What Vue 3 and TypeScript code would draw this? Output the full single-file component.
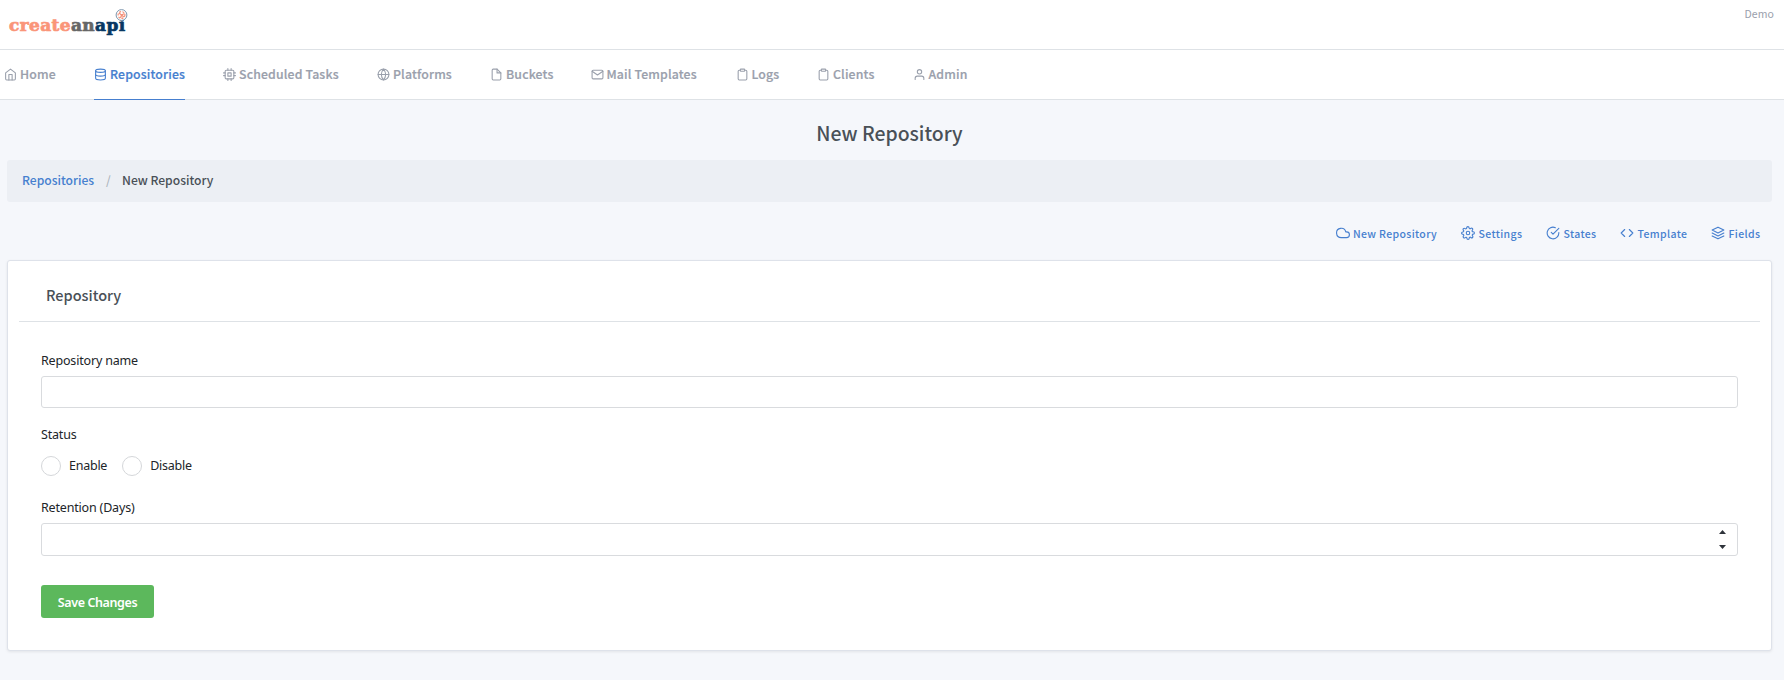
<script setup lang="ts">
import { ref } from 'vue'

interface LinkItem {
  label: string
  icon: string
  width: number
  active?: boolean
}

const icons: Record<string, string> = {
  home: '<path d="M3 9l9-7 9 7v11a2 2 0 0 1-2 2H5a2 2 0 0 1-2-2z"/><path d="M9 22V12h6v10"/>',
  database: '<ellipse cx="12" cy="5" rx="9" ry="3"/><path d="M21 12c0 1.66-4 3-9 3s-9-1.34-9-3"/><path d="M3 5v14c0 1.66 4 3 9 3s9-1.34 9-3V5"/>',
  cpu: '<rect x="4" y="4" width="16" height="16" rx="2"/><rect x="9" y="9" width="6" height="6"/><path d="M9 1v3M15 1v3M9 20v3M15 20v3M20 9h3M20 14h3M1 9h3M1 14h3"/>',
  globe: '<circle cx="12" cy="12" r="10"/><path d="M2 12h20M12 2a15.3 15.3 0 0 1 4 10 15.3 15.3 0 0 1-4 10 15.3 15.3 0 0 1-4-10 15.3 15.3 0 0 1 4-10z"/>',
  file: '<path d="M13 2H6a2 2 0 0 0-2 2v16a2 2 0 0 0 2 2h12a2 2 0 0 0 2-2V9z"/><path d="M13 2v7h7"/>',
  mail: '<path d="M4 4h16c1.1 0 2 .9 2 2v12c0 1.1-.9 2-2 2H4c-1.1 0-2-.9-2-2V6c0-1.1.9-2 2-2z"/><path d="M22 6l-10 7L2 6"/>',
  clipboard: '<path d="M16 4h2a2 2 0 0 1 2 2v14a2 2 0 0 1-2 2H6a2 2 0 0 1-2-2V6a2 2 0 0 1 2-2h2"/><rect x="8" y="2" width="8" height="4" rx="1"/>',
  user: '<path d="M20 21v-2a4 4 0 0 0-4-4H8a4 4 0 0 0-4 4v2"/><circle cx="12" cy="7" r="4"/>',
  cloud: '<path d="M18 10h-1.26A8 8 0 1 0 9 20h9a5 5 0 0 0 0-10z"/>',
  settings: '<circle cx="12" cy="12" r="3"/><path d="M19.4 15a1.65 1.65 0 0 0 .33 1.82l.06.06a2 2 0 1 1-2.83 2.83l-.06-.06a1.65 1.65 0 0 0-2.8 1.17V21a2 2 0 0 1-4 0v-.09a1.65 1.65 0 0 0-2.9-1.08l-.06.06a2 2 0 1 1-2.83-2.83l.06-.06a1.65 1.65 0 0 0-1.17-2.8H3a2 2 0 0 1 0-4h.09a1.65 1.65 0 0 0 1.08-2.9l-.06-.06a2 2 0 1 1 2.83-2.83l.06.06a1.65 1.65 0 0 0 2.8-1.17V3a2 2 0 0 1 4 0v.09a1.65 1.65 0 0 0 2.8 1.17l.06-.06a2 2 0 1 1 2.83 2.83l-.06.06a1.65 1.65 0 0 0 1.17 2.8H21a2 2 0 0 1 0 4h-.09a1.65 1.65 0 0 0-1.51 1z"/>',
  check: '<path d="M22 11.08V12a10 10 0 1 1-5.93-9.14"/><path d="M22 4L12 14.01l-3-3"/>',
  code: '<path d="M16 18l6-6-6-6M8 6l-6 6 6 6"/>',
  layers: '<path d="M12 2L2 7l10 5 10-5z"/><path d="M2 17l10 5 10-5M2 12l10 5 10-5"/>',
}

const navItems: LinkItem[] = [
  { label: 'Home', icon: 'home', width: 52 },
  { label: 'Repositories', icon: 'database', width: 91, active: true },
  { label: 'Scheduled Tasks', icon: 'cpu', width: 116 },
  { label: 'Platforms', icon: 'globe', width: 75 },
  { label: 'Buckets', icon: 'file', width: 62.5 },
  { label: 'Mail Templates', icon: 'mail', width: 107 },
  { label: 'Logs', icon: 'clipboard', width: 43.5 },
  { label: 'Clients', icon: 'clipboard', width: 57.5 },
  { label: 'Admin', icon: 'user', width: 55 },
]

const actions: LinkItem[] = [
  { label: 'New Repository', icon: 'cloud', width: 101.5 },
  { label: 'Settings', icon: 'settings', width: 61 },
  { label: 'States', icon: 'check', width: 50 },
  { label: 'Template', icon: 'code', width: 67 },
  { label: 'Fields', icon: 'layers', width: 49 },
]

const name = ref('')
const status = ref('')
const retention = ref<number>()

const step = (amount: number) => {
  retention.value = (Number(retention.value) || 0) + amount
}
</script>

<template>
  <div class="page">
    <header class="topbar">
      <svg class="logo" width="122" height="32" viewBox="0 0 122 32" role="img" aria-label="createanapi">
        <text class="word" x="1" y="23.3" textLength="116.500" lengthAdjust="spacingAndGlyphs"><tspan class="create">create</tspan><tspan class="an">an</tspan><tspan class="api">api</tspan></text>
        <circle cx="113.5" cy="7" r="5.4" fill="#fff" stroke="#7d96ae" stroke-width="1" />
        <g fill="none" stroke="#f48f77" stroke-width="1.2">
          <circle cx="113.5" cy="7" r="3.4" stroke-dasharray="2 1.3" />
          <path d="M111 5l2.5 2 3-1.500M113.500 7l-1 3M113.500 7l2.500 2" />
        </g>
      </svg>
      <span class="account">Demo</span>
    </header>

    <nav class="nav">
      <a
        v-for="item in navItems"
        :key="item.label"
        class="nav-link"
        :class="{ active: item.active }"
        :style="{ width: item.width + 'px' }"
      >
        <svg class="icon" viewBox="0 0 24 24" v-html="icons[item.icon]"></svg>
        <span>{{ item.label }}</span>
      </a>
    </nav>

    <main class="content">
      <h1 class="title">New Repository</h1>

      <div class="breadcrumb">
        <a class="crumb">Repositories</a>
        <span class="slash">/</span>
        <span class="current">New Repository</span>
      </div>

      <div class="actions">
        <a v-for="item in actions" :key="item.label" class="action" :style="{ width: item.width + 'px' }">
          <svg class="icon" viewBox="0 0 24 24" v-html="icons[item.icon]"></svg>
          <span>{{ item.label }}</span>
        </a>
      </div>

      <section class="card">
        <h2 class="card-title">Repository</h2>
        <form class="form" @submit.prevent>
          <label class="label" for="name">Repository name</label>
          <input id="name" v-model="name" class="field name" type="text" />

          <span class="label status-label">Status</span>
          <div class="radios">
            <label class="radio"><input v-model="status" type="radio" value="enable" /><span>Enable</span></label>
            <label class="radio"><input v-model="status" type="radio" value="disable" /><span>Disable</span></label>
          </div>

          <label class="label retention-label" for="retention">Retention (Days)</label>
          <div class="field number">
            <input id="retention" v-model="retention" type="text" />
            <div class="spinner">
              <button type="button" aria-label="Increase" @click="step(1)"><svg width="7" height="4"><path d="M0 4L3.500 0 7 4z" /></svg></button>
              <button type="button" aria-label="Decrease" @click="step(-1)"><svg width="7" height="4"><path d="M0 0h7L3.500 4z" /></svg></button>
            </div>
          </div>

          <button class="save" type="submit">Save Changes</button>
        </form>
      </section>
    </main>
  </div>
</template>

<style>
html,
body {
  margin: 0;
  background: #f5f7fb;
}
</style>

<style scoped>
.page {
  box-sizing: border-box;
  height: 680px;
  overflow: hidden;
  background: #f5f7fb;
  font-family: "Noto Sans CJK SC", "Noto Sans", sans-serif;
  color: #495057;
}
.topbar {
  box-sizing: border-box;
  display: flex;
  justify-content: space-between;
  height: 50px;
  padding: 8px 10px 0 8px;
  background: #fff;
  border-bottom: 1px solid #dee2e6;
}
.logo {
  display: block;
}
.word {
  font: bold 16.500px "DejaVu Serif", serif;
  letter-spacing: 0.400px;
  stroke-width: 0.7px;
}
.create { fill: #fa9579; stroke: #fa9579; }
.an { fill: #666; stroke: #666; }
.api { fill: #073763; stroke: #073763; }
.account {
  font-size: 10.500px;
  line-height: 12px;
  color: #9aa0ac;
  letter-spacing: 0.1px;
}
.icon {
  flex: none;
  fill: none;
  stroke: currentColor;
  stroke-width: 2;
  stroke-linecap: round;
  stroke-linejoin: round;
}
.nav {
  box-sizing: border-box;
  display: flex;
  gap: 38px;
  height: 50px;
  padding-left: 4px;
  background: #fff;
  border-bottom: 1px solid #dee2e6;
}
.nav-link {
  box-sizing: border-box;
  display: flex;
  align-items: center;
  gap: 3px;
  height: 50px;
  color: #9aa0ac;
  font-size: 12.300px;
  font-weight: 500;
  letter-spacing: 0.150px;
  white-space: nowrap;
  border-bottom: 1px solid transparent;
}
.nav-link span {
  padding-bottom: 2px;
  -webkit-text-stroke: 0.2px currentColor;
}
.nav-link .icon {
  width: 13px;
  height: 13px;
}
.nav-link.active {
  color: #467fcf;
  border-color: #467fcf;
}
.content {
  padding: 0 12px 0 7px;
}
.title {
  box-sizing: border-box;
  margin: 0;
  padding-top: 17px;
  height: 60px;
  line-height: 32px;
  font-size: 19.400px;
  font-weight: 500;
  text-align: center;
}
.breadcrumb {
  box-sizing: border-box;
  display: flex;
  align-items: center;
  height: 42px;
  padding: 0 15px 4px;
  background: #eceff4;
  border-radius: 3px;
  font-size: 12.100px;
  font-weight: 500;
}
.crumb { width: 84px; color: #467fcf; }
.slash { width: 16px; color: #adb5bd; }
.actions {
  display: flex;
  justify-content: flex-end;
  gap: 24px;
  height: 58px;
  padding-right: 12px;
}
.action {
  display: flex;
  align-items: center;
  gap: 3.500px;
  height: 62px;
  color: #467fcf;
  font-size: 10.500px;
  font-weight: 500;
  letter-spacing: 0.350px;
  white-space: nowrap;
}
.action span {
  padding-top: 1px;
}
.action .icon {
  width: 14px;
  height: 14px;
  stroke-width: 1.900;
}
.card {
  box-sizing: border-box;
  height: 391px;
  padding: 0 11px;
  background: #fff;
  border: 1px solid #dee2ea;
  border-radius: 3px;
  box-shadow: 0 1px 3px rgba(0, 0, 0, 0.08);
}
.card-title {
  box-sizing: border-box;
  height: 61px;
  margin: 0;
  padding: 19px 27px 0;
  border-bottom: 1px solid #dee2e6;
  font-size: 14.500px;
  line-height: 30px;
  font-weight: 500;
}
.form {
  padding: 30px 22px 0;
  font-family: "Noto Sans", "Open Sans", sans-serif;
  color: #212529;
}
.label {
  display: block;
  height: 24px;
  font-size: 12.500px;
  line-height: 18px;
  letter-spacing: -0.180px;
}
.field {
  box-sizing: border-box;
  display: block;
  width: 100%;
  height: 33px;
  padding: 0 12px;
  border: 1px solid #d9dbde;
  border-radius: 3px;
  background: #fff;
  outline: none;
}
.field.name { height: 32px; }
.status-label { margin-top: 18px; }
.radios {
  display: flex;
  gap: 15px;
  height: 20px;
  margin-top: 6px;
}
.radio {
  display: flex;
  align-items: center;
  gap: 8px;
  height: 20px;
  font-size: 12.500px;
  line-height: 18px;
  letter-spacing: -0.250px;
}
.radio span { padding-bottom: 1px; }
.radio input {
  appearance: none;
  box-sizing: border-box;
  width: 20px;
  height: 20px;
  margin: 0;
  border: 1px solid #d5d7da;
  border-radius: 50%;
}
.radio input:checked { border: 6px solid #467fcf; }
.retention-label { margin-top: 23px; }
.number {
  display: flex;
  align-items: center;
  padding-right: 11px;
}
.number input {
  flex: 1;
  border: 0;
  outline: none;
}
.spinner {
  display: flex;
  flex-direction: column;
  gap: 11px;
}
.spinner button {
  display: block;
  height: 4px;
  padding: 0;
  border: 0;
  background: none;
}
.spinner svg {
  display: block;
  fill: #2e333a;
}
.save {
  display: block;
  width: 113px;
  height: 33px;
  margin-top: 29px;
  padding: 2px 0 0;
  border: 0;
  border-radius: 3px;
  background: #5cb85c;
  color: #fff;
  font: 600 12.500px "Noto Sans", "Open Sans", sans-serif;
  letter-spacing: -0.400px;
}
</style>
